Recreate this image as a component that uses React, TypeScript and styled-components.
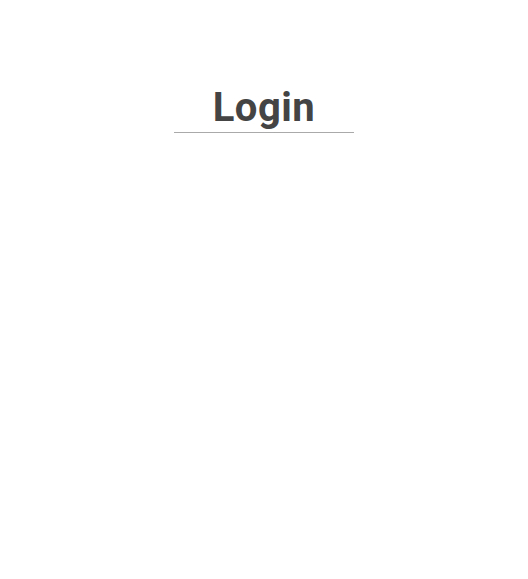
import styled, { createGlobalStyle } from "styled-components";

const GlobalStyle = createGlobalStyle`
  body {
    margin: 0;
    background: #fff;
    font-family: Roboto, "Liberation Sans", sans-serif;
  }
`;

const Wrapper = styled.div`
  display: flex;
  flex-direction: column;
  align-items: center;
  padding-top: 85px;
`;

const Title = styled.h1`
  margin: 0;
  width: 180px;
  text-align: center;
  font-size: 40px;
  font-weight: 700;
  letter-spacing: 0.5px;
  line-height: 45px;
  color: #444;
  padding-bottom: 2px;
  border-bottom: 1px solid #aaa;
`;

const App = () => {
  return (
    <>
      <GlobalStyle />
      <Wrapper>
        <Title>Login</Title>
      </Wrapper>
    </>
  );
};

export default App;
